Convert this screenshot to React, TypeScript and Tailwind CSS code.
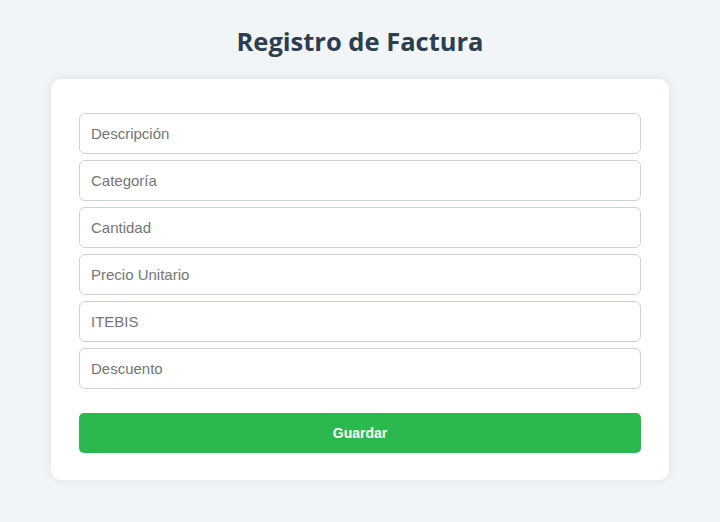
export default function App() {
  const fields = ["Descripción", "Categoría", "Cantidad", "Precio Unitario", "ITEBIS", "Descuento"];
  return (
    <div className="min-h-[522px] w-full bg-[#f2f5f8] flex flex-col items-center pt-[22px]" style={{ fontFamily: '"Liberation Sans", Arial, sans-serif' }}>
      <h1 className="text-[25.5px] leading-[38px] font-bold text-[#2c3e50]" style={{ fontFamily: '"Open Sans", "Noto Sans", sans-serif' }}>
        Registro de Factura
      </h1>
      <div className="mt-[19px] w-[618px] bg-white rounded-[10px] shadow-[0_0_10px_rgba(0,0,0,0.08)] px-[28px] pt-[28px] pb-[27px] flex flex-col">
        {fields.map((f) => (
          <input
            key={f}
            placeholder={f}
            className="mt-[6px] h-[41px] w-full rounded-[6px] border border-[#cfd0dd] px-[11px] text-[15px] text-[#333] placeholder:text-[#757575] outline-none"
          />
        ))}
        <button className="mt-[24px] h-[40px] w-full rounded-[5px] bg-[#2bb84e] text-white text-[14px] font-bold">
          Guardar
        </button>
      </div>
    </div>
  );
}
